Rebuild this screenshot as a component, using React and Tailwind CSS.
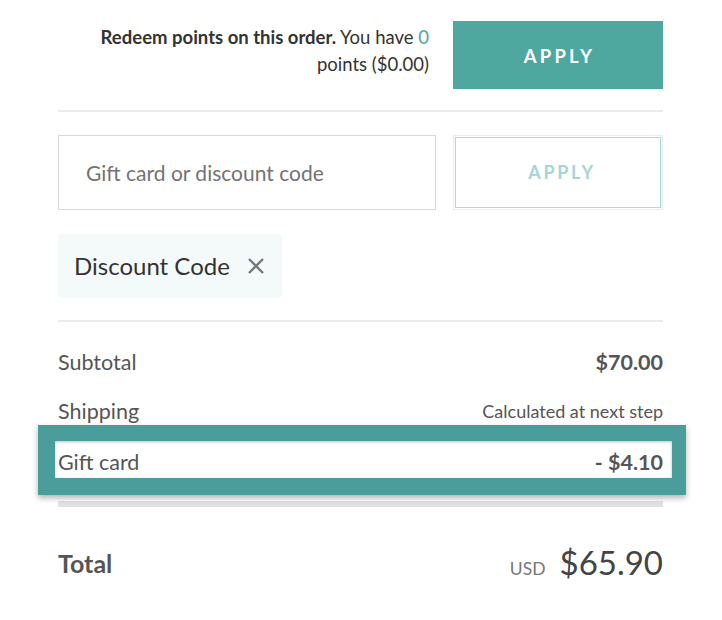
import React from "react";

export default function App() {
  return (
    <div className="w-[722px] h-[620px] bg-white overflow-hidden" style={{ fontFamily: "Lato, 'Noto Sans', sans-serif" }}>
      <div className="ml-[58px] w-[605px] pt-[21px]">
        {/* points */}
        <div className="flex items-center gap-[24px]">
          <div className="flex-1 text-right text-[18.5px] leading-[27px] text-[#333] pl-[20px] pb-[9px]">
            <span className="font-bold">Redeem points on this order.</span> You have{" "}
            <span className="text-[#4ea8a0]">0</span> points ($0.00)
          </div>
          <button className="w-[210px] h-[68px] bg-[#4ea89f] text-white font-bold text-[18.5px] tracking-[0.17em] pt-[3px] pl-[3px]">
            APPLY
          </button>
        </div>
        <div className="mt-[21px] h-[2px] bg-[#ebebeb]" />

        {/* code input */}
        <div className="mt-[23px] flex gap-[17px]">
          <div className="w-[378px] h-[75px] border border-[#d9d9d9] flex items-center pl-[27px] text-[21px] text-[#737373]">
            Gift card or discount code
          </div>
          <div className="w-[210px] h-[75px] border border-[#ececec] p-[1px]">
            <div className="w-full h-full border border-[#a9dbd6] flex items-center justify-center text-[#a5d6d1] font-bold text-[18px] tracking-[0.15em] pl-[8px]">
              APPLY
            </div>
          </div>
        </div>

        {/* tag */}
        <div className="mt-[24px] inline-flex items-center h-[64px] w-[224px] bg-[#f4faf9] rounded-[4px] pl-[16px]">
          <span className="text-[24px] text-[#333]">Discount Code</span>
          <svg className="ml-[17px]" width="18" height="18" viewBox="0 0 18 18">
            <path d="M2 2 L16 16 M16 2 L2 16" stroke="#777" strokeWidth="2.4" />
          </svg>
        </div>

        <div className="mt-[22px] h-[2px] bg-[#ebebeb]" />

        {/* rows */}
        <div className="pt-[16px]">
          <div className="h-[49px] flex items-center justify-between text-[21.5px] text-[#555]">
            <span>Subtotal</span>
            <span className="font-bold">$70.00</span>
          </div>
          <div className="h-[49px] flex items-center justify-between text-[#555]">
            <span className="text-[21.5px]">Shipping</span>
            <span className="text-[18px]">Calculated at next step</span>
          </div>
          <div className="relative h-[50px] flex items-center justify-between text-[21.5px] text-[#555] pt-[2px]">
            <span>Gift card</span>
            <span className="font-bold">- $4.10</span>
            <div className="absolute top-[-11px] bottom-[-9px] left-[-20px] right-[-23px] border-solid border-[#4a9d9a] border-t-[16px] border-b-[17px] border-l-[17px] border-r-[14px] shadow-[0_3px_6px_rgba(0,0,0,0.3)] pointer-events-none">
              <div className="w-full h-full shadow-[inset_0_1px_3px_rgba(0,0,0,0.25)]" />
            </div>
          </div>
        </div>
        <div className="mt-[15px] h-[6px] bg-[#e1e1e1]" />

        {/* total */}
        <div className="mt-[38px] flex items-center justify-between">
          <span className="text-[25px] font-bold text-[#555]">Total</span>
          <div className="flex items-baseline gap-[14px]">
            <span className="text-[17.5px] text-[#777]">USD</span>
            <span className="text-[33px] text-[#444] leading-none">$65.90</span>
          </div>
        </div>
      </div>
    </div>
  );
}
